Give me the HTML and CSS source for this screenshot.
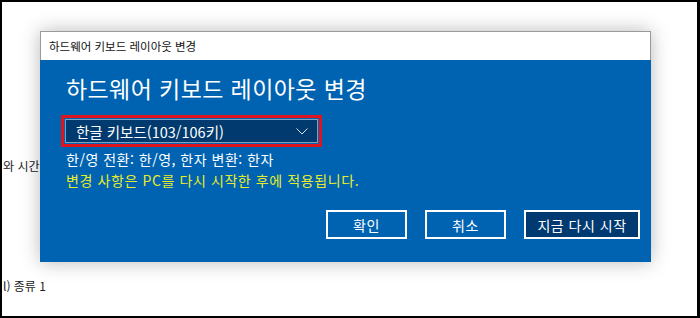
FILE: index.html
```html
<!DOCTYPE html>
<html lang="ko">
<head>
    <meta charset="UTF-8">
    <title>하드웨어 키보드 레이아웃 변경</title>
    <link rel="stylesheet" href="styles.css">
</head>
<body>
    <div class="frame">
        <div class="doc">
            <p class="doc-line first">와 시간</p>
            <p class="doc-line second">l) 종류 1</p>
        </div>

        <div class="dialog">
            <div class="titlebar">하드웨어 키보드 레이아웃 변경</div>
            <div class="content">
                <h1>하드웨어 키보드 레이아웃 변경</h1>
                <div class="highlight">
                    <div class="select">
                        <span>한글 키보드(103/106키)</span>
                        <svg class="chevron" width="12" height="7" viewBox="0 0 12 7">
                            <path d="M0.5 0.5 L6 6 L11.5 0.5" fill="none" stroke="#d8e2ec" stroke-width="1"/>
                        </svg>
                    </div>
                </div>
                <p class="info">한/영 전환: 한/영, 한자 변환: 한자</p>
                <p class="notice">변경 사항은 PC를 다시 시작한 후에 적용됩니다.</p>
                <div class="buttons">
                    <button class="btn">확인</button>
                    <button class="btn">취소</button>
                    <button class="btn primary">지금 다시 시작</button>
                </div>
            </div>
        </div>
    </div>
</body>
</html>
```

FILE: styles.css
```css
body {
    margin: 0;
    padding: 0;
    font-family: "Noto Sans CJK KR", "Noto Sans", sans-serif;
    background-color: #fff;
}
.frame {
    position: relative;
    width: 700px;
    height: 318px;
    box-sizing: border-box;
    border: 2px solid #000;
    border-right-width: 3px;
    background-color: #fff;
    overflow: hidden;
}
.doc {
    padding-left: 1px;
}
.doc-line {
    margin: 0;
    font-size: 12px;
    line-height: 16px;
    color: #222;
}
.doc-line.first {
    padding-top: 156px;
}
.doc-line.second {
    padding-top: 104px;
}
.dialog {
    position: absolute;
    left: 38px;
    top: 29px;
    width: 611px;
    height: 231px;
    display: flex;
    flex-direction: column;
    box-shadow: 0 0 18px rgba(0, 0, 0, 0.28);
}
.titlebar {
    height: 28px;
    line-height: 28px;
    padding-left: 8px;
    font-size: 11.5px;
    color: #111;
    background-color: #fff;
    border: 1px solid #9a9a9a;
    border-bottom: none;
}
.content {
    flex: 1;
    display: flex;
    flex-direction: column;
    padding: 13px 11px 23px 26px;
    background-color: #0063b1;
    color: #fff;
}
h1 {
    margin: 0;
    font-size: 23px;
    font-weight: normal;
    line-height: 30px;
    letter-spacing: 0.4px;
}
.highlight {
    align-self: flex-start;
    margin: 12px 0 0 -5px;
    border: 3px solid #e0141e;
    padding: 1px;
}
.select {
    width: 232px;
    height: 22px;
    display: flex;
    align-items: center;
    justify-content: space-between;
    padding: 0 9px 0 10px;
    background-color: #003a6e;
    border: 1px solid #7f9fbf;
    font-size: 14.5px;
}
.chevron {
    display: block;
}
.info {
    margin: 2px 0 0;
    font-size: 14px;
    line-height: 20px;
    letter-spacing: 0.5px;
}
.notice {
    margin: 1px 0 0;
    font-size: 14px;
    line-height: 20px;
    letter-spacing: 0.6px;
    color: #e8ec2a;
}
.buttons {
    margin-top: auto;
    display: flex;
    justify-content: flex-end;
    gap: 18px;
}
.btn {
    width: 81px;
    height: 29px;
    padding: 0;
    font-family: inherit;
    font-size: 14px;
    letter-spacing: 0.5px;
    color: #fff;
    background-color: transparent;
    border: 2px solid #fff;
}
.btn.primary {
    width: 116px;
    background-color: #003a70;
}
```
